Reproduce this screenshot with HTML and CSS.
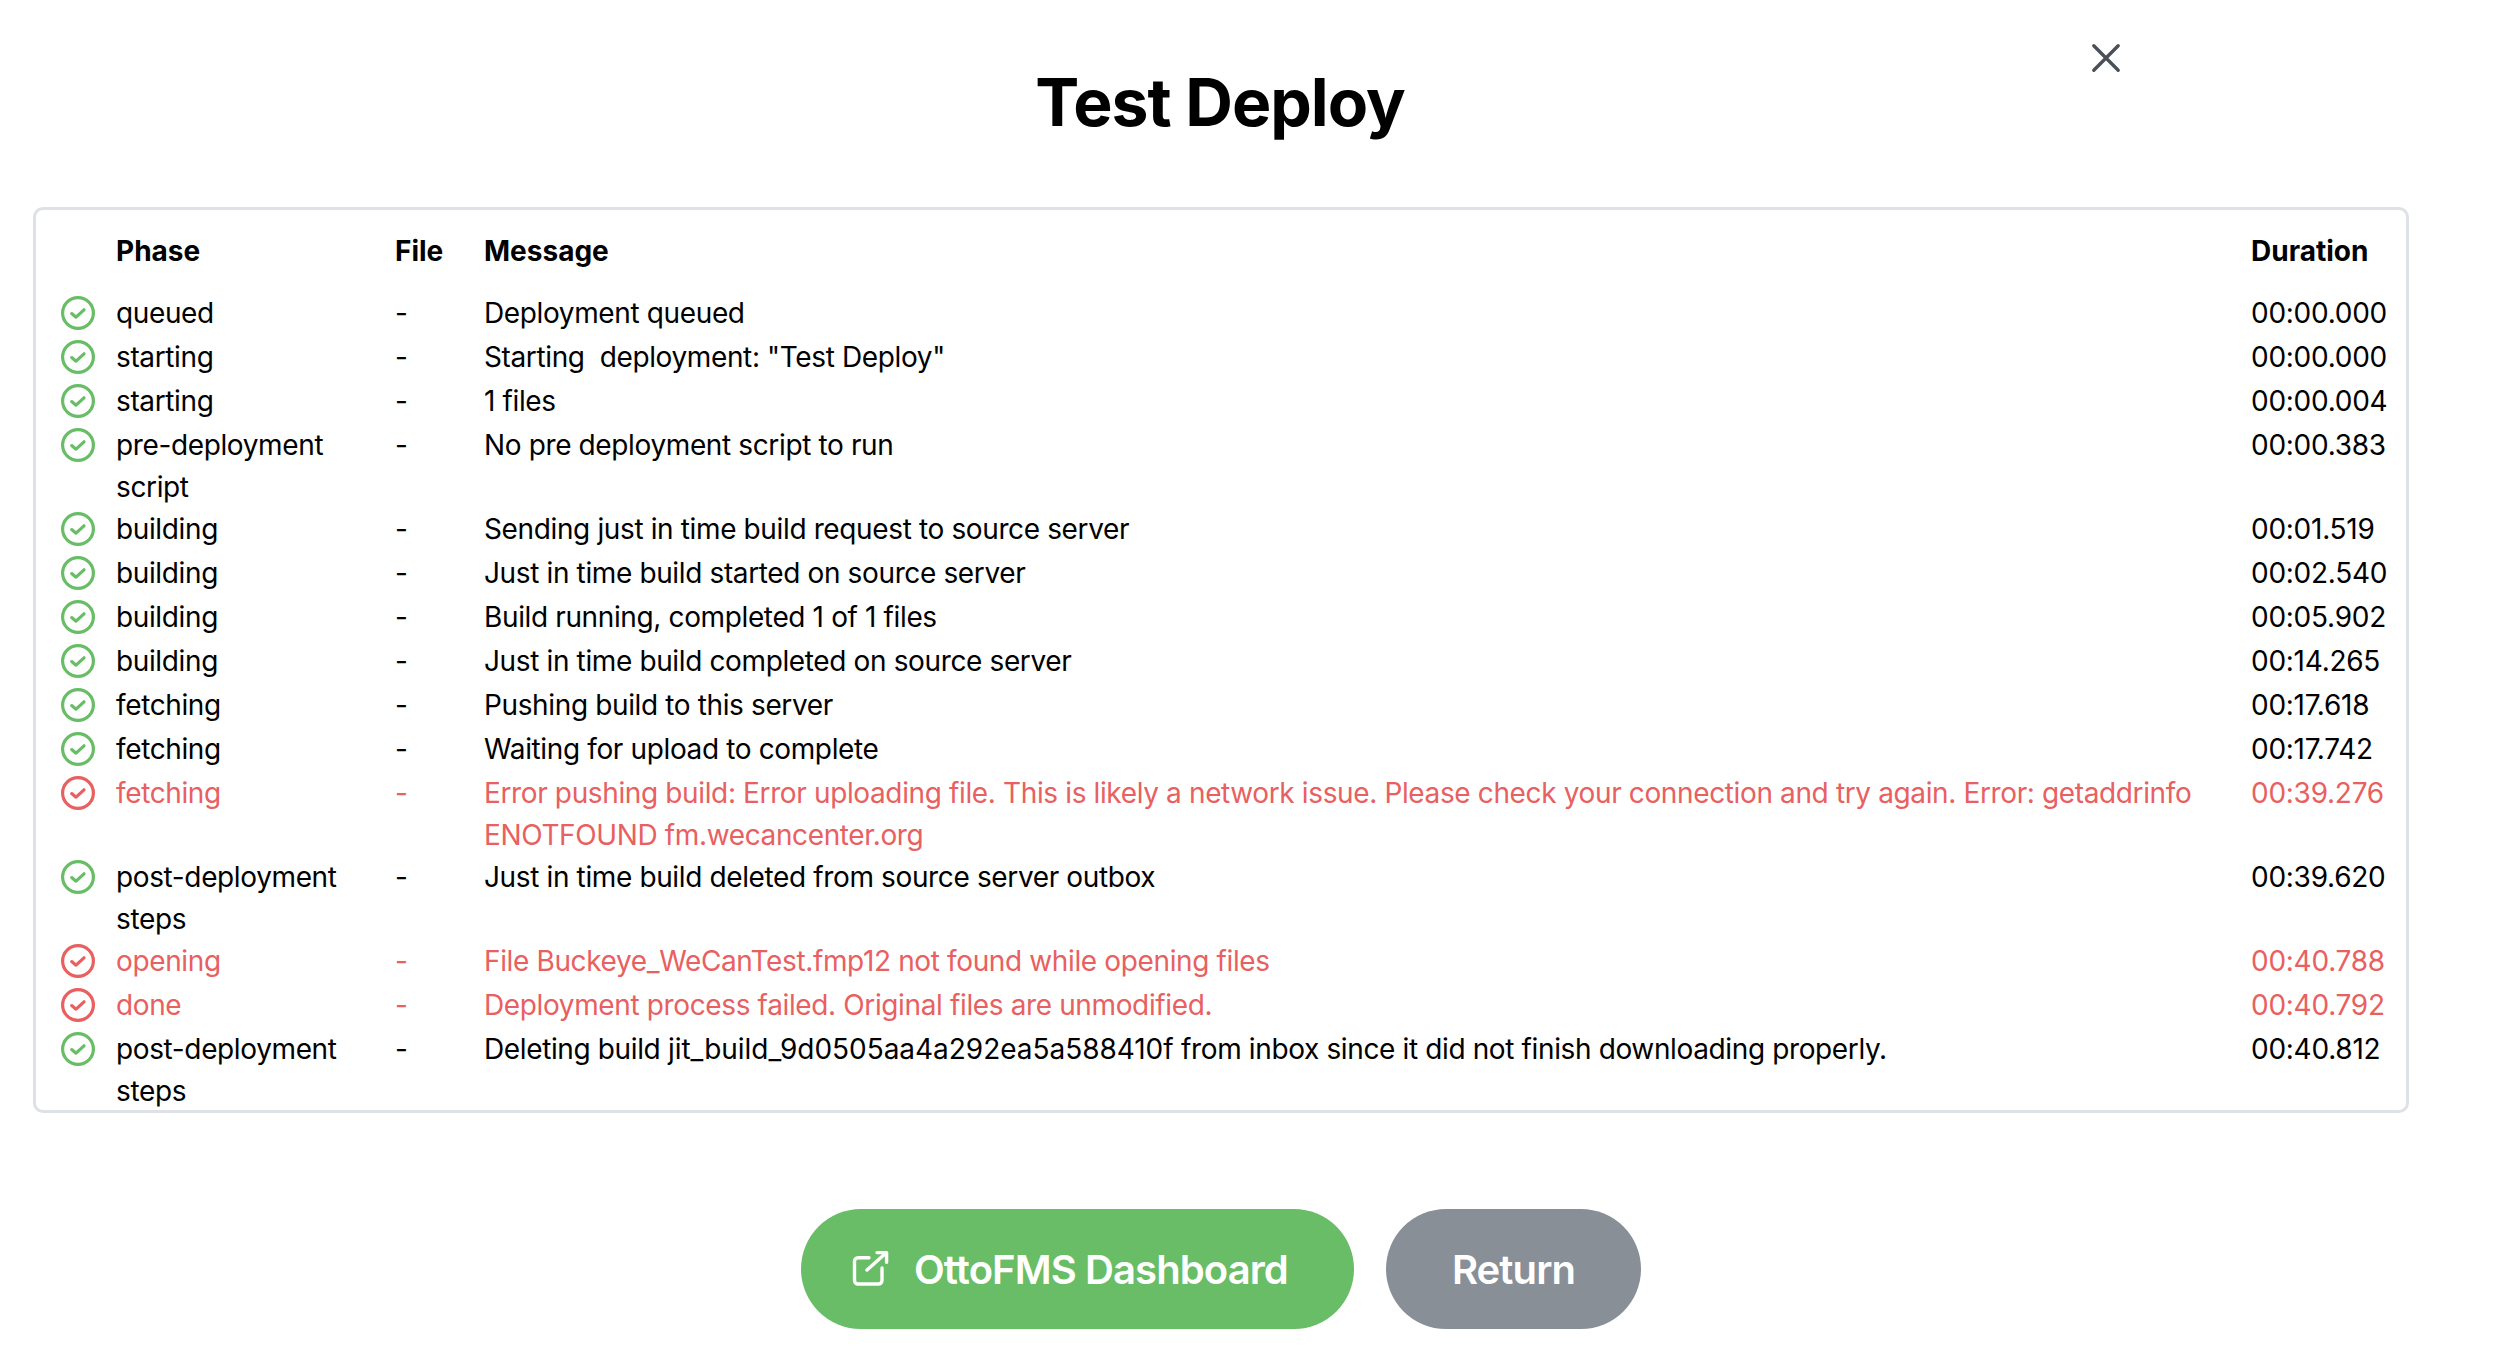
FILE: index.html
```html
<!DOCTYPE html>
<html lang="en">
<head>
  <meta charset="UTF-8">
  <meta name="viewport" content="width=device-width, initial-scale=1.0">
  <title>Test Deploy</title>
  <link rel="stylesheet" href="styles.css">
</head>
<body>
  <div class="deploy-modal">
    <!-- Close -->
    <button class="close-btn" aria-label="Close">
      <svg viewBox="0 0 32 32">
        <path d="M3 3L29 29M29 3L3 29"/>
      </svg>
    </button>

    <h1 class="deploy-title">Test Deploy</h1>

    <!-- Deployment log -->
    <div class="log-card">
      <table class="log-table">
        <colgroup>
          <col class="col-icon">
          <col class="col-phase">
          <col class="col-file">
          <col class="col-message">
          <col class="col-duration">
        </colgroup>
        <thead>
          <tr>
            <th></th>
            <th>Phase</th>
            <th>File</th>
            <th>Message</th>
            <th>Duration</th>
          </tr>
        </thead>
        <tbody>
          <tr>
            <td class="icon-cell"><svg class="status-icon" viewBox="0 0 34 34"><circle cx="17" cy="17" r="15.4"/><path d="M10.7 17.6L15 21.2L23 13.8"/></svg></td>
            <td>queued</td>
            <td>-</td>
            <td>Deployment queued</td>
            <td class="time-cell">00:00.000</td>
          </tr>
          <tr>
            <td class="icon-cell"><svg class="status-icon" viewBox="0 0 34 34"><circle cx="17" cy="17" r="15.4"/><path d="M10.7 17.6L15 21.2L23 13.8"/></svg></td>
            <td>starting</td>
            <td>-</td>
            <td class="keep-spaces">Starting  deployment: "Test Deploy"</td>
            <td class="time-cell">00:00.000</td>
          </tr>
          <tr>
            <td class="icon-cell"><svg class="status-icon" viewBox="0 0 34 34"><circle cx="17" cy="17" r="15.4"/><path d="M10.7 17.6L15 21.2L23 13.8"/></svg></td>
            <td>starting</td>
            <td>-</td>
            <td>1 files</td>
            <td class="time-cell">00:00.004</td>
          </tr>
          <tr>
            <td class="icon-cell"><svg class="status-icon" viewBox="0 0 34 34"><circle cx="17" cy="17" r="15.4"/><path d="M10.7 17.6L15 21.2L23 13.8"/></svg></td>
            <td>pre-deployment script</td>
            <td>-</td>
            <td>No pre deployment script to run</td>
            <td class="time-cell">00:00.383</td>
          </tr>
          <tr>
            <td class="icon-cell"><svg class="status-icon" viewBox="0 0 34 34"><circle cx="17" cy="17" r="15.4"/><path d="M10.7 17.6L15 21.2L23 13.8"/></svg></td>
            <td>building</td>
            <td>-</td>
            <td>Sending just in time build request to source server</td>
            <td class="time-cell">00:01.519</td>
          </tr>
          <tr>
            <td class="icon-cell"><svg class="status-icon" viewBox="0 0 34 34"><circle cx="17" cy="17" r="15.4"/><path d="M10.7 17.6L15 21.2L23 13.8"/></svg></td>
            <td>building</td>
            <td>-</td>
            <td>Just in time build started on source server</td>
            <td class="time-cell">00:02.540</td>
          </tr>
          <tr>
            <td class="icon-cell"><svg class="status-icon" viewBox="0 0 34 34"><circle cx="17" cy="17" r="15.4"/><path d="M10.7 17.6L15 21.2L23 13.8"/></svg></td>
            <td>building</td>
            <td>-</td>
            <td>Build running, completed 1 of 1 files</td>
            <td class="time-cell">00:05.902</td>
          </tr>
          <tr>
            <td class="icon-cell"><svg class="status-icon" viewBox="0 0 34 34"><circle cx="17" cy="17" r="15.4"/><path d="M10.7 17.6L15 21.2L23 13.8"/></svg></td>
            <td>building</td>
            <td>-</td>
            <td>Just in time build completed on source server</td>
            <td class="time-cell">00:14.265</td>
          </tr>
          <tr>
            <td class="icon-cell"><svg class="status-icon" viewBox="0 0 34 34"><circle cx="17" cy="17" r="15.4"/><path d="M10.7 17.6L15 21.2L23 13.8"/></svg></td>
            <td>fetching</td>
            <td>-</td>
            <td>Pushing build to this server</td>
            <td class="time-cell">00:17.618</td>
          </tr>
          <tr>
            <td class="icon-cell"><svg class="status-icon" viewBox="0 0 34 34"><circle cx="17" cy="17" r="15.4"/><path d="M10.7 17.6L15 21.2L23 13.8"/></svg></td>
            <td>fetching</td>
            <td>-</td>
            <td>Waiting for upload to complete</td>
            <td class="time-cell">00:17.742</td>
          </tr>
          <tr class="is-error">
            <td class="icon-cell"><svg class="status-icon" viewBox="0 0 34 34"><circle cx="17" cy="17" r="15.4"/><path d="M10.7 17.6L15 21.2L23 13.8"/></svg></td>
            <td>fetching</td>
            <td>-</td>
            <td>Error pushing build: Error uploading file. This is likely a network issue. Please check your connection and try again. Error: getaddrinfo ENOTFOUND fm.wecancenter.org</td>
            <td class="time-cell">00:39.276</td>
          </tr>
          <tr>
            <td class="icon-cell"><svg class="status-icon" viewBox="0 0 34 34"><circle cx="17" cy="17" r="15.4"/><path d="M10.7 17.6L15 21.2L23 13.8"/></svg></td>
            <td>post-deployment steps</td>
            <td>-</td>
            <td>Just in time build deleted from source server outbox</td>
            <td class="time-cell">00:39.620</td>
          </tr>
          <tr class="is-error">
            <td class="icon-cell"><svg class="status-icon" viewBox="0 0 34 34"><circle cx="17" cy="17" r="15.4"/><path d="M10.7 17.6L15 21.2L23 13.8"/></svg></td>
            <td>opening</td>
            <td>-</td>
            <td>File Buckeye_WeCanTest.fmp12 not found while opening files</td>
            <td class="time-cell">00:40.788</td>
          </tr>
          <tr class="is-error">
            <td class="icon-cell"><svg class="status-icon" viewBox="0 0 34 34"><circle cx="17" cy="17" r="15.4"/><path d="M10.7 17.6L15 21.2L23 13.8"/></svg></td>
            <td>done</td>
            <td>-</td>
            <td>Deployment process failed. Original files are unmodified.</td>
            <td class="time-cell">00:40.792</td>
          </tr>
          <tr>
            <td class="icon-cell"><svg class="status-icon" viewBox="0 0 34 34"><circle cx="17" cy="17" r="15.4"/><path d="M10.7 17.6L15 21.2L23 13.8"/></svg></td>
            <td>post-deployment steps</td>
            <td>-</td>
            <td>Deleting build <span class="build-id">jit_build_9d0505aa4a292ea5a588410f</span> from inbox since it did not finish downloading properly.</td>
            <td class="time-cell">00:40.812</td>
          </tr>
        </tbody>
      </table>
    </div>

    <!-- Actions -->
    <div class="deploy-actions">
      <a class="pill-btn pill-green" href="#">
        <svg class="link-icon" viewBox="0 0 40 40">
          <path d="M19 8.7H8a3.5 3.5 0 0 0-3.5 3.5V31.5A3.5 3.5 0 0 0 8 35H28.5a3.5 3.5 0 0 0 3.5-3.5V19"/>
          <path d="M17 21L36 4M27 3.6H36.6V13.2"/>
        </svg>
        OttoFMS Dashboard
      </a>
      <a class="pill-btn pill-gray" href="#">Return</a>
    </div>
  </div>
</body>
</html>
```

FILE: styles.css
```css
/* Base */
:root {
  --text-color: #000000;
  --green: #68bd66;
  --red: #e8605f;
  --gray: #898f97;
  --border-color: #dee2e6;
}

* {
  margin: 0;
  padding: 0;
  box-sizing: border-box;
}

body {
  font-family: Inter, "Liberation Sans", sans-serif;
  background-color: #ffffff;
  color: var(--text-color);
}

/* Modal */
.deploy-modal {
  position: relative;
  width: 2442px;
  padding: 0 33px;
}

.close-btn {
  position: absolute;
  top: 43px;
  left: 2091px;
  width: 32px;
  height: 30px;
  background: none;
  border: none;
  cursor: pointer;
}

.close-btn svg {
  display: block;
  width: 30px;
  height: 30px;
  fill: none;
  stroke: #495057;
  stroke-width: 3.6;
  stroke-linecap: round;
}

.deploy-title {
  height: 207px;
  padding-top: 62px;
  padding-right: 2px;
  font-size: 66px;
  line-height: 80px;
  font-weight: 700;
  letter-spacing: -1px;
  text-align: center;
}

/* Log table */
.log-card {
  height: 906px;
  border: 3px solid var(--border-color);
  border-radius: 10px;
  overflow: hidden;
}

.log-table {
  width: 100%;
  table-layout: fixed;
  border-collapse: collapse;
  font-size: 28px;
  line-height: 42px;
  letter-spacing: -0.37px;
}

.col-icon { width: 80px; }
.col-phase { width: 279px; }
.col-file { width: 89px; }
.col-message { width: 1767px; }

.log-table th {
  padding-top: 20px;
  padding-bottom: 20px;
  font-weight: 700;
  letter-spacing: 0;
  text-align: left;
}

.log-table td {
  vertical-align: top;
  padding-right: 24px;
}

.icon-cell {
  height: 44px;
  padding-left: 25px;
}

.status-icon {
  display: block;
  width: 34px;
  height: 34px;
  margin-top: 4px;
  fill: none;
  stroke: var(--green);
  stroke-width: 3.2;
  stroke-linecap: round;
  stroke-linejoin: round;
}

.keep-spaces {
  white-space: pre-wrap;
}

.log-table .time-cell {
  padding-right: 0;
  letter-spacing: -0.26px;
}

.build-id {
  letter-spacing: -0.03px;
}

.is-error td {
  color: var(--red);
}

.is-error .status-icon {
  stroke: var(--red);
}

/* Buttons */
.deploy-actions {
  display: flex;
  justify-content: center;
  gap: 32px;
  margin-top: 96px;
}

.pill-btn {
  display: flex;
  align-items: center;
  justify-content: center;
  gap: 24px;
  height: 120px;
  border-radius: 60px;
  color: #ffffff;
  font-size: 40px;
  font-weight: 600;
  letter-spacing: -0.9px;
  text-decoration: none;
}

.pill-green {
  justify-content: flex-start;
  width: 553px;
  padding-left: 49px;
  background-color: var(--green);
}

.pill-gray {
  width: 255px;
  background-color: var(--gray);
}

.link-icon {
  width: 40px;
  height: 40px;
  fill: none;
  stroke: #ffffff;
  stroke-width: 3.4;
  stroke-linecap: round;
  stroke-linejoin: round;
}
```
